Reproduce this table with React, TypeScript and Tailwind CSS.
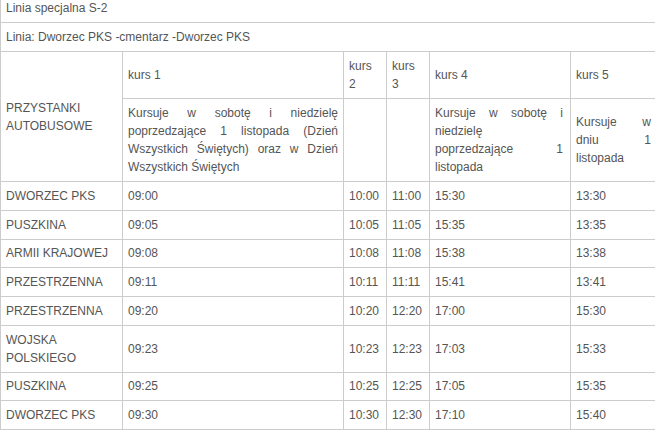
import React from 'react';

const stops: { name: string; times: string[] }[] = [
  { name: 'DWORZEC PKS', times: ['09:00', '10:00', '11:00', '15:30', '13:30'] },
  { name: 'PUSZKINA', times: ['09:05', '10:05', '11:05', '15:35', '13:35'] },
  { name: 'ARMII KRAJOWEJ', times: ['09:08', '10:08', '11:08', '15:38', '13:38'] },
  { name: 'PRZESTRZENNA', times: ['09:11', '10:11', '11:11', '15:41', '13:41'] },
  { name: 'PRZESTRZENNA', times: ['09:20', '10:20', '12:20', '17:00', '15:30'] },
  { name: 'WOJSKA POLSKIEGO', times: ['09:23', '10:23', '12:23', '17:03', '15:33'] },
  { name: 'PUSZKINA', times: ['09:25', '10:25', '12:25', '17:05', '15:35'] },
  { name: 'DWORZEC PKS', times: ['09:30', '10:30', '12:30', '17:10', '15:40'] },
];

const cell = 'border border-[#cccccc] px-[5px] py-[5px] align-middle font-normal';
const bodyCell = 'border border-[#cccccc] px-[5px] py-[4.875px] align-middle';

const App: React.FC = () => {
  return (
    <div className="w-[655px] h-[432px] overflow-hidden bg-white">
      <table
        className="-mt-[7px] w-[658px] table-fixed border-collapse text-left text-[12px] leading-[18px] text-[#555555]"
        style={{ fontFamily: '"Liberation Sans", Arial, sans-serif' }}
      >
        <colgroup>
          <col className="w-[122px]" />
          <col className="w-[221px]" />
          <col className="w-[43px]" />
          <col className="w-[43px]" />
          <col className="w-[141px]" />
          <col className="w-[88px]" />
        </colgroup>
        <tbody>
          <tr>
            <td colSpan={6} className={cell}>Linia specjalna S-2</td>
          </tr>
          <tr>
            <td colSpan={6} className={cell}>Linia: Dworzec PKS -cmentarz -Dworzec PKS</td>
          </tr>
          <tr>
            <td rowSpan={2} className={cell}>PRZYSTANKI AUTOBUSOWE</td>
            <td className={cell}>kurs 1</td>
            <td className={cell}>kurs 2</td>
            <td className={cell}>kurs 3</td>
            <td className={cell}>kurs 4</td>
            <td className={cell}>kurs 5</td>
          </tr>
          <tr>
            <td className="border border-[#cccccc] px-[5px] py-[5px] align-middle text-justify">
              Kursuje w sobotę i niedzielę poprzedzające 1 listopada (Dzień Wszystkich Świętych) oraz w Dzień Wszystkich Świętych
            </td>
            <td className={cell}></td>
            <td className={cell}></td>
            <td className="border border-[#cccccc] pl-[5px] pr-[7px] py-[5px] align-middle text-justify">
              Kursuje w sobotę i niedzielę poprzedzające 1 listopada
            </td>
            <td className="border border-[#cccccc] pl-[5px] pr-[7px] py-[5px] align-middle text-justify">
              Kursuje w dniu 1 listopada
            </td>
          </tr>
          {stops.map((stop, i) => (
            <tr key={stop.name + i}>
              <td className={bodyCell}>{stop.name}</td>
              {stop.times.map((t, j) => (
                <td key={j} className={bodyCell}>{t}</td>
              ))}
            </tr>
          ))}
        </tbody>
      </table>
    </div>
  );
};

export default App;
